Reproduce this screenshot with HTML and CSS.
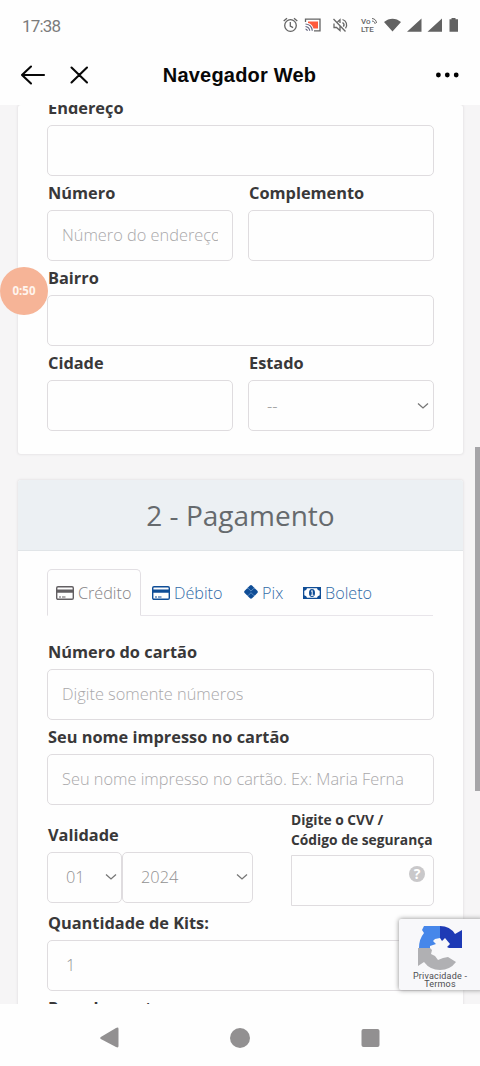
FILE: index.html
```html
<!DOCTYPE html>
<html lang="pt-BR">
<head>
<meta charset="utf-8">
<title>Navegador Web</title>
<link rel="stylesheet" href="styles.css">
</head>
<body>
<div class="phone">
  <header class="status">
    <span class="clock">17:38</span>
    <svg class="status-icons" width="180" height="20" viewBox="0 0 180 20">
      <g fill="none" stroke="#646464" stroke-width="1.3">
        <circle cx="10.5" cy="10.5" r="5.8"/><path d="M10.3 7v4l2.8 1.6M3.7 6 7 3.2M14 3.2 17.3 6"/>
        <path d="M25.5 7V4.2H40v11.6h-6"/>
      </g>
      <path d="M28 6.5h10v7h-4.500C32.500 10 30.500 8.500 28 8z" fill="#ff5a3c"/>
      <g fill="none" stroke="#666680" stroke-width="1.200"><path d="M25.500 9c4 .3 6.500 3 6.800 6.800M25.500 11.500c2.500.3 4 2 4.200 4.300M25.500 14c1 .2 1.700.8 1.900 1.900"/></g>
      <g fill="none" stroke="#686868" stroke-width="1.300"><path d="M53.500 4l12 12.500M54 8.500v4h2.500l3.500 3V11M57.500 7 60 4.800V8M62.500 7.500c1.500 1 1.800 2.800.9 4.200M62.500 4.500c4 1.200 5.300 5.500 3 8.800"/></g>
      <g fill="none" stroke="#666"><path d="M92 6c2 .2 3 1.300 3.200 3M92 3.500c3 .3 4.300 2 4.500 4.500"/></g>
      <path d="M104 7c5-4.500 12-4.500 17 0l-8.500 9.500zM141.500 3.500v13.300H127zM162 3.500v13.300h-14.500zM169.500 4.300h2V3h4v1.300h2.500v12.500h-8.500z" fill="#626262"/>
      <text x="81" y="9" class="volte">Vo</text><text x="81" y="17.300" class="volte">LTE</text>
    </svg>
  </header>
  <nav class="appbar">
    <svg width="72" height="24" viewBox="0 0 72 24" fill="none" stroke="#080808" stroke-width="2.100" stroke-linecap="round" stroke-linejoin="round"><path d="M11 3.500 2 12l9 8.500M2 12h22M51.500 4.500 67 19.500M67 4.500 51.500 19.500"/></svg>
    <h1 class="title">Navegador Web</h1>
    <svg width="24" height="8" viewBox="0 0 24 8"><circle cx="3.400" cy="4" r="2.400"/><circle cx="12.300" cy="4" r="2.400"/><circle cx="21.200" cy="4" r="2.400"/></svg>
  </nav>

  <main class="viewport">
    <section class="card card-address">
      <div class="field"><label class="label">Endereço</label><div class="input"></div></div>
      <div class="row">
        <div class="field"><label class="label">Número</label><div class="input"><span class="placeholder">Número do endereço</span></div></div>
        <div class="field"><label class="label">Complemento</label><div class="input"></div></div>
      </div>
      <div class="field"><label class="label">Bairro</label><div class="input"></div></div>
      <div class="row">
        <div class="field"><label class="label">Cidade</label><div class="input"></div></div>
        <div class="field"><label class="label">Estado</label><div class="input select"><span class="value">--</span><svg class="chevron" width="12" height="8" viewBox="0 0 12 8"><path d="m1 1.500 5 4.500 5-4.500"/></svg></div></div>
      </div>
    </section>

    <section class="card card-payment">
      <h2 class="card-title">2 - Pagamento</h2>
      <div class="card-body">
        <div class="tabs">
          <span class="tab tab-active"><svg width="18" height="16" viewBox="0 0 18 16"><rect x=".7" y="1.700" width="16.600" height="12.600" rx="1.300" fill="none" stroke="currentColor" stroke-width="1.400"/><path d="M1 4.500h16v3.300H1zM3 11.500h2v1H3zM6 11.500h3.500v1H6z" fill="currentColor"/></svg>Crédito</span>
          <span class="tab tab-debit"><svg width="18" height="16" viewBox="0 0 18 16"><rect x=".7" y="1.700" width="16.600" height="12.600" rx="1.300" fill="none" stroke="currentColor" stroke-width="1.400"/><path d="M1 4.500h16v3.300H1zM3 11.500h2v1H3zM6 11.500h3.500v1H6z" fill="currentColor"/></svg>Débito</span>
          <span class="tab tab-pix"><svg width="14" height="18" viewBox="0 0 14 18"><path d="M5.700 1.700q1.300-1.200 2.600 0l5 5q1.100 1.200 0 2.400l-5 5q-1.300 1.200-2.600 0l-5-5q-1.100-1.200 0-2.400z" fill="currentColor"/><path d="M3 4.300h1.200L7 7.100l2.800-2.800H11M3 11.500h1.200L7 8.700l2.800 2.800H11" fill="none" stroke="#7ba5d2" stroke-width=".7"/></svg>Pix</span>
          <span class="tab tab-boleto"><svg width="18" height="16" viewBox="0 0 18 16"><path d="M0 2h18v12H0z" fill="currentColor"/><path d="M4 3.300h10q.3 2 2.700 2.500v4.400q-2.400.5-2.700 2.500H4q-.3-2-2.700-2.500V5.800Q3.700 5.300 4 3.300z" fill="#fff"/><ellipse cx="9" cy="8" rx="3" ry="4" fill="currentColor"/><path d="M8 6.500 9.200 5.500v4.700M7.800 10.300h2.800" fill="none" stroke="#fff"/></svg>Boleto</span>
        </div>
        <div class="field"><label class="label">Número do cartão</label><div class="input"><span class="placeholder">Digite somente números</span></div></div>
        <div class="field"><label class="label">Seu nome impresso no cartão</label><div class="input"><span class="placeholder">Seu nome impresso no cartão. Ex: Maria Ferna</span></div></div>
        <div class="expiry-row">
          <div class="expiry">
            <label class="label">Validade</label>
            <div class="selects">
              <div class="input select month"><span class="value">01</span><svg class="chevron" width="12" height="8" viewBox="0 0 12 8"><path d="m1 1.500 5 4.500 5-4.500"/></svg></div>
              <div class="input select year"><span class="value">2024</span><svg class="chevron" width="12" height="8" viewBox="0 0 12 8"><path d="m1 1.500 5 4.500 5-4.500"/></svg></div>
            </div>
          </div>
          <div class="cvv">
            <label class="cvv-label">Digite o CVV /<br>Código de segurança</label>
            <div class="input cvv-input"><span class="help">?</span></div>
          </div>
        </div>
        <div class="field"><label class="label">Quantidade de Kits:</label><div class="input select"><span class="value">1</span></div></div>
        <label class="label">Parcelamento:</label>
      </div>
    </section>
  </main>

  <footer class="navbar">
    <svg width="280" height="24" viewBox="0 0 280 24" fill="#929091"><path d="M.8 11 16 2q2.500-1.300 2.500 1v17q0 2.300-2.500 1L.8 13q-1.200-1 0-2z"/><circle cx="140" cy="12" r="10"/><rect x="261.500" y="3" width="18" height="18" rx="2"/></svg>
  </footer>

  <div class="scroll-thumb"></div>
  <div class="timer">0:50</div>
  <aside class="recaptcha">
    <svg width="46" height="46" viewBox="0 0 46 46">
      <path d="M23 1v12l-5 1-2 2 3 3-6 2v2H2q0-9 5-15L5 5l2-4z" fill="#4687ea"/>
      <path d="M23 1q10 0 15 8l7-4v18H32l-2-1 3-3-5-6-3 3-2-3z" fill="#1e3ab5"/>
      <path d="M1 23h12l2 2-1 4 4 2 3 4 5-2 5-1 8 5q-6 8-16 8-10 0-16-8l-6 4z" fill="#b0b0b3"/>
    </svg>
    <span class="legal">Privacidade -<br>Termos</span>
  </aside>
</div>
</body>
</html>
```
FILE: styles.css
```css
* { box-sizing: border-box; }
body { margin: 0; background: #fefefe; font-family: "Open Sans", sans-serif; }
.phone { position: relative; width: 480px; height: 1066px; overflow: hidden; display: flex; flex-direction: column; }
.status { height: 50px; padding: 15px 20px 0 22px; display: flex; justify-content: space-between; flex: none; }
.clock { font: 400 17px/22px Roboto, sans-serif; letter-spacing: -.8px; color: #7b7b7b; }
.status-icons { flex: none; }
.volte { font: 500 8px Roboto, sans-serif; fill: #666; }
.appbar { height: 55px; flex: none; display: grid; grid-template-columns: 72px 1fr 72px; align-items: center; padding: 0 21px 5px 20px; }
.appbar svg:last-child { justify-self: end; }
.title { margin: 0; font: 700 20px/24px "Liberation Sans", sans-serif; text-align: center; white-space: nowrap; color: #080808; letter-spacing: .2px; }
.viewport { height: 899px; flex: none; overflow: hidden; background: #f6f5f6; padding: 0 17px 0 18px; }
.card { background: #fefefe; box-shadow: 0 0 2px 1px #e8e6e8; border-radius: 3px; }
.card-address { display: flow-root; height: 349px; margin-bottom: 26px; padding: 0 29px; }
.card-address > .field:first-child { margin-top: -14.500px; }
.label { display: block; height: 34px; padding-left: 1px; font-size: 16.350px; font-weight: 700; line-height: 34px; color: #393839; white-space: nowrap; }
.input { height: 51.200px; border: 1.500px solid #dfdcdf; border-radius: 5px; background: #fefefe; display: flex; align-items: center; padding: 0 14px; overflow: hidden; }
.placeholder { overflow: hidden; white-space: nowrap; font-weight: 300; font-size: 16.350px; color: #a9a8aa; }
.row { display: grid; grid-template-columns: 1fr 1fr; gap: 15px; }
.field { min-width: 0; }
.select { justify-content: space-between; padding: 0 4px 0 18px; }
.value { font-size: 16.350px; color: #929192; font-weight: 300; }
.chevron { fill: none; stroke: #777; stroke-width: 1.300; }
.card-payment { height: 540px; }
.card-title { margin: 0; height: 71px; background: #ecf0f3; border-bottom: 1px solid #e1e5e8; border-radius: 3px 3px 0 0; text-align: center; font-size: 28px; font-weight: 400; line-height: 71px; color: #666a6d; }
.card-body { padding: 18px 29px 0; }
.tabs { display: flex; height: 47px; border-bottom: 1px solid #e8e5ea; margin: 0 1px 18.500px 0; }
.tab { display: flex; align-items: center; gap: 4px; height: 47px; font-size: 16.200px; font-weight: 300; color: #326ba8; white-space: nowrap; }
.tab svg { color: #0f4d96; flex: none; }
.tab-active { width: 94px; padding-left: 8px; border: 1px solid #e2dfe3; border-bottom-color: #fefefe; border-radius: 5px 5px 0 0; color: #858386; }
.tab-active svg { color: #625f62; }
.tab-debit { width: 103px; padding-left: 11px; }
.tab-pix { width: 59px; }
.tab-boleto { width: 80px; }
.expiry-row { display: flex; justify-content: space-between; height: 101px; }
.expiry { padding-top: 13px; }
.selects { display: flex; }
.month { width: 75px; }
.year { width: 131px; }
.cvv { width: 143px; padding-top: 5px; }
.cvv-label { display: block; height: 45px; font-size: 13.800px; line-height: 20px; font-weight: 700; color: #393839; white-space: nowrap; }
.cvv-input { justify-content: flex-end; align-items: flex-start; padding: 10px 8px; border-radius: 0 5px 5px 0; }
.help { width: 16px; height: 16px; border-radius: 50%; background: #c9c8ca; color: #fff; text-align: center; font: 700 14px/16px "Open Sans", sans-serif; }
.navbar { height: 62px; flex: none; padding: 22px 0 0 100px; }
.scroll-thumb { position: absolute; left: 475px; top: 447px; width: 5px; height: 344px; background: #a6a5a8; }
.timer { position: absolute; left: 0; top: 267px; width: 48px; height: 48px; border-radius: 50%; background: #f6b497; color: #fff5ee; text-align: center; font: 700 11.500px/48px "Open Sans", sans-serif; }
.recaptcha { position: absolute; left: 399px; top: 919px; width: 84px; height: 71px; background: #f8f8fa; box-shadow: 0 0 5px #8b8b8b; border-radius: 2px 0 0 2px; padding: 6px 0 0 18px; }
.recaptcha svg { display: block; }
.legal { display: block; width: 82px; margin: 2px 0 0 -18px; font: 400 9px/7.500px Roboto, sans-serif; letter-spacing: .2px; text-align: center; color: #4d4d50; }
```
